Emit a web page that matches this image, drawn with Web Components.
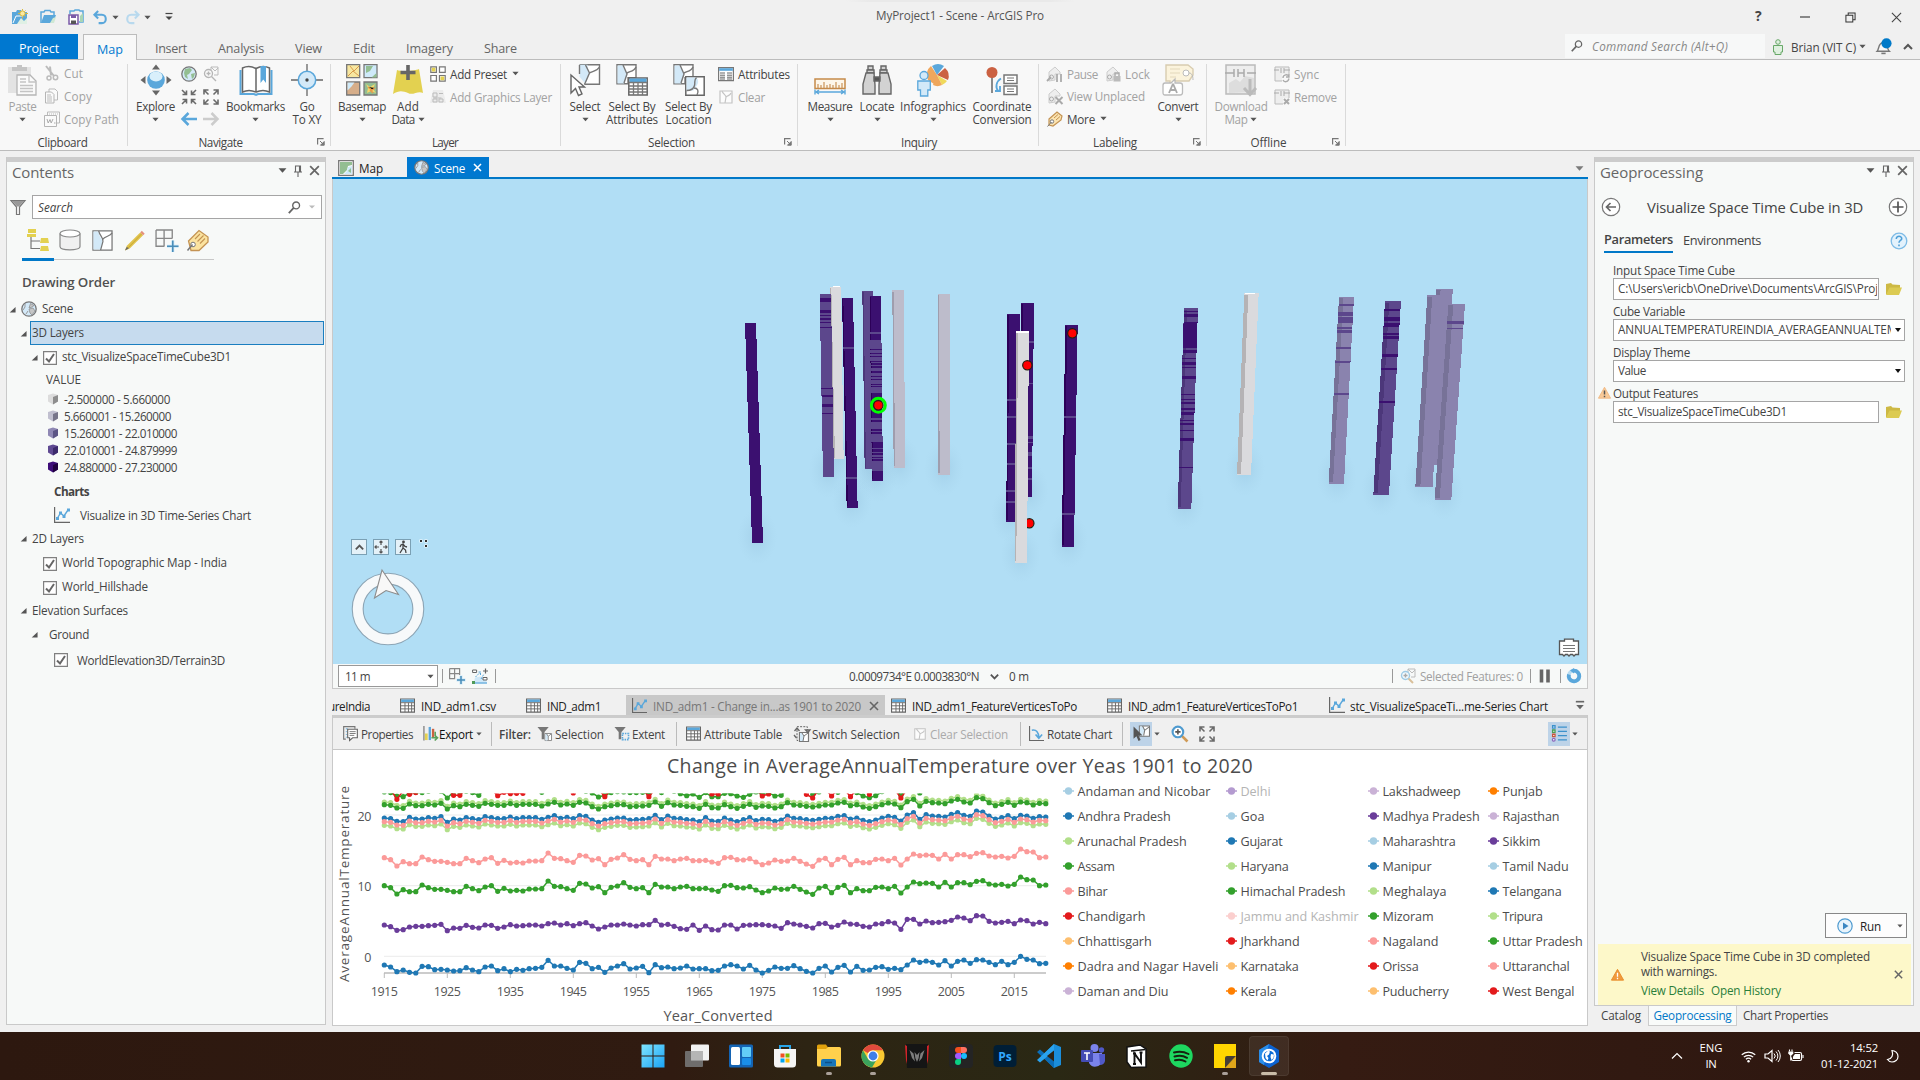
<!DOCTYPE html>
<html lang="en">
<head>
<meta charset="utf-8">
<title>MyProject1 - Scene - ArcGIS Pro</title>
<style>
html,body{margin:0;width:1920px;height:1080px;overflow:hidden;background:#f0f0f0}
body{font:11.7px/16px "Open Sans","Noto Sans",sans-serif;color:#444}
</style>
</head>
<body>
<pro-app></pro-app>
<script>
const G='#6a6a6a', B='#5aa7db', LB='#d3e9f8', Y='#e3d150', D='#bdbdbd';
/* name: [viewBox size, markup] */
const ICONS={
 newproj:[16,`<path d="M0 3h4l1-2h4l1 2h5v12H0z" fill="${B}"/><path d="M5 15l4-6 3 3 3-3v6z" fill="#dff0e4"/><path d="M1 14l3-7h7" stroke="#fff" fill="none"/><circle cx="10.500" cy="4.500" r="2.600" fill="#fbe9a0" stroke="#d8b93e"/><path d="M10.500 0v1.500M10.500 8v1.500M6 4.500h1.500M14 4.500h2M7.500 1.500l1 1M13.500 1.500l-1 1M13.500 7.500l-1-1" stroke="#d8b93e"/>`],
 openproj:[16,`<path d="M1 14V3h3l1-1.500h5L11 3h3v3" fill="none" stroke="${B}" stroke-width="1.500"/><path d="M1 14l3-8h12l-3 8z" fill="${B}"/><path d="M10 14l3-5 3-1-2 6z" fill="#cfe8d4"/>`],
 saveproj:[16,`<path d="M2 5V2h4l1-1h4l1 1h3v11h-4" fill="none" stroke="${B}" stroke-width="1.500"/><path d="M12 13V7l3-3v9z" fill="#a9d5b5"/><path d="M1 6h9v9H1z" fill="#fff" stroke="#7a5aa8" stroke-width="1.500"/><path d="M3 6h5v3H3z" fill="#7a5aa8"/><path d="M3 11.500h5V15H3z" fill="#555"/>`],
 undo:[16,`<path d="M5.500 1L1.500 5l4 4M2 5h7.500c5.500 0 5.500 9 0 9H6" fill="none" stroke="${B}" stroke-width="2.200"/>`],
 redo:[16,`<path d="M10.500 1l4 4-4 4M14 5H6.500C1 5 1 14 6.500 14H10" fill="none" stroke="#b8d9ee" stroke-width="2.200"/>`],
 custom:[10,`<path d="M1.500 1.500h7" stroke="#444" stroke-width="1.200"/><path d="M1.500 4.500h7L5 8z" fill="#444"/>`],
 arrow:[8,`<path d="M.5 2h7L4 6z" fill="#555"/>`],
 arrowg:[8,`<path d="M1 2.500h6L4 5.500z" fill="#bbb"/>`],
 paste:[32,`<path d="M1 3h23v26H1z" fill="#e3e3e3"/><path d="M5 3h5V1h5v2h5v4H5z" fill="#c4c4c4"/><path d="M10 11h13l6 6v14H10z" fill="#fafafa" stroke="#b5b5b5" stroke-width="1.300"/><path d="M22 11v7h7M13 15h6M13 18h6M13 21.500h13M13 24.500h13M13 27.500h13" fill="none" stroke="#c4c4c4" stroke-width="1.300"/>`],
 cut:[16,`<path d="M2 1l8 10M6 1.500l1 9" stroke="#bbb" stroke-width="2"/><circle cx="5" cy="13" r="2" fill="none" stroke="#bbb" stroke-width="1.500"/><circle cx="11.500" cy="12.500" r="2.200" fill="none" stroke="#bbb" stroke-width="1.500"/>`],
 copy:[16,`<path d="M5 1h6l2.500 2.500V12H5z" fill="#fafafa" stroke="#bbb"/><path d="M1.500 4h6L10 6.500V15H1.500z" fill="#fafafa" stroke="#b5b5b5"/><path d="M3 7h4M3 9h5M3 11h5M3 13h5" stroke="#bbb"/>`],
 copypath:[16,`<path d="M3.500 1h12v11h-12z" fill="#fafafa" stroke="#bbb"/><path d="M5 3h9" stroke="#bbb" stroke-dasharray="1 1"/><path d="M.5 4.500h12v11H.5z" fill="#fafafa" stroke="#b5b5b5"/><path d="M3 8l1.200 4L6 8.500l1.200 3.500L9 8" fill="none" stroke="#aaa"/><path d="M10 12h1.500" stroke="#aaa"/>`],
 explore:[32,`<circle cx="16" cy="16" r="8.800" fill="${B}"/><ellipse cx="16" cy="12.500" rx="6.500" ry="5" fill="#d9effb"/><path d="M12 5.500h8L16 .5zM12 26.500h8L16 31.500zM5.500 12v8L.5 16zM26.500 12v8l5-4z" fill="#666"/>`],
 globe:[16,`<circle cx="8" cy="8" r="7.200" fill="${LB}" stroke="#777" stroke-width="1.300"/><path d="M4 3l5-1 2 2-3 4-2 1 1 4-3-2-1-4zM10 8l4-1-1 4-2 2z" fill="#93be92"/>`],
 zoomsel:[16,`<path d="M8 1h7v8h-4M8 4v-3l4 4 3-3" fill="none" stroke="#bbb"/><circle cx="5.500" cy="7.500" r="4" fill="#fafafa" stroke="#b5b5b5" stroke-width="1.300"/><path d="M3.500 7.500h4M5.500 5.500v4M8.500 10.500L13 15" stroke="#b5b5b5" stroke-width="1.400"/>`],
 fixin:[16,`<path d="M1 1l4 4M15 1l-4 4M1 15l4-4M15 15l-4-4M5.500 1.500v4h-4M10.500 1.500v4h4M5.500 14.500v-4h-4M10.500 14.500v-4h4" fill="none" stroke="${G}" stroke-width="1.600"/>`],
 fixout:[16,`<path d="M1.500 1.500l4 4M14.500 1.500l-4 4M1.500 14.500l4-4M14.500 14.500l-4-4M5.500 1h-4.500v4.500M10.500 1h4.500v4.500M5.500 15H1v-4.500M10.500 15H15v-4.500" fill="none" stroke="${G}" stroke-width="1.600"/>`],
 back:[16,`<path d="M7.500 2L1.500 8l6 6M2 8h14" fill="none" stroke="${B}" stroke-width="2.500"/>`],
 fwd:[16,`<path d="M8.500 2l6 6-6 6M14 8H0" fill="none" stroke="#ccc" stroke-width="2.500"/>`],
 bookmark:[32,`<path d="M.5 6v24H14l2 1 2-1h13.500V6" fill="none" stroke="${B}" stroke-width="2"/><path d="M2.500 4c4-2 9-2 13.500.5C20.500 2 25.500 2 29.500 4v24c-4-2-9-2-13.500 0-4.500-2-9.500-2-13.500 0z" fill="#fff" stroke="#666" stroke-width="1.500"/><path d="M16 4.500V28" stroke="#666" stroke-width="1.500"/><path d="M20.500 2H26v17l-2.700-3.500-2.800 3.500z" fill="${B}"/>`],
 goxy:[32,`<path d="M16 0v7M16 25v7M0 16h7M25 16h7" stroke="#666" stroke-width="1.300"/><circle cx="16" cy="16" r="8.700" fill="${LB}" stroke="${B}" stroke-width="1.500"/><circle cx="16" cy="16" r="1.700" fill="#444"/>`],
 basemap:[32,`<g stroke="#777" stroke-width="1.300"><path d="M.7.7h13v13H.7z" fill="#f7e7a0"/><path d="M18 .7h13v13H18z" fill="#cfeaf9"/><path d="M.7 18h13v13H.7z" fill="#d6ae8a"/><path d="M18 18h13v13H18z" fill="#93be92"/></g><path d="M2 12l5-5 6 5M4 2l4 5 5-5" stroke="#d89a4b" fill="none"/><path d="M20 2h7l-3 5-4 2z" fill="#93be92"/><path d="M30.500 9l-5 4.500h5z" fill="#93be92"/><path d="M1.500 18.500h7l-3 4-4 4z" fill="#cfeaf9"/><path d="M20 20l4 3 5-3-2 5 3 4-5-2-4 2 1-5z" fill="#f5d76a"/><path d="M22 23l4 3 3-2M24 26l3 3" stroke="#e89a4a" stroke-width="1.500"/>`],
 adddata:[32,`<path d="M5 6c4 2 18 1 22-1l4 24c-5-3-10 3-15 0-5-2-9-3-15 1z" fill="${Y}"/><path d="M16 1v15M8.500 8.500h15" stroke="#666" stroke-width="3.600"/>`],
 preset:[16,`<g fill="#fff" stroke="#777" stroke-width="1.200"><path d="M.8.8h5.600v5.600H.8zM9.500.8h5.700v5.600H9.500z"/><path d="M.8 9.500h5.600v5.700H.8zM9.500 9.500h5.700v5.700H9.500z"/></g><path d="M1.800 1.800h3.600v3.600H1.800zM10.500 10.500h3.700v3.700h-3.700z" fill="${Y}"/>`],
 graphics:[16,`<path d="M3 1h10l3 13H0z" fill="#ececec"/><path d="M3 4h4v4H3zM9 4.500h4M3.500 9h8M3 10h4v3H3zM9 10h4v3H9z" fill="none" stroke="#bbb"/>`],
 select:[32,`<path d="M10.500 .8h20v19.500H15.500" fill="#fff" stroke="#777" stroke-width="1.400"/><path d="M10.500 .8h8c0 5 2 8 2 9l-4 10-6-7z" fill="${LB}"/><path d="M15.500 20.500L20.500 9l-4-8M20.500 9c2-2 7-1 10-6M10.500 1v9" fill="none" stroke="#777" stroke-width="1.400"/><path d="M2 11v18l4.500-4.500 3 7 3.500-1.500-3-7h5.500z" fill="#fff" stroke="#666" stroke-width="1.400"/>`],
 selattr:[32,`<path d="M1 .8h19v13H12v6H1z" fill="#fff" stroke="#777" stroke-width="1.400"/><path d="M1.500 1.500H7c0 4 4 6 4 9l-3 9H1.500z" fill="${LB}"/><path d="M7 1l4 9-3 9M11 9c2-2 7-1 9-6" fill="none" stroke="#777" stroke-width="1.400"/><path d="M12.800 14h18.400v17H12.800z" fill="#fff" stroke="#666" stroke-width="1.500"/><path d="M13.500 14.500h17v3.500h-17z" fill="${B}"/><path d="M13 18.500h18M13 22h18M13 25h18M13 28h18M17.500 18v13M22 18v13M26.500 18v13" stroke="#777" stroke-width="1.300"/>`],
 selloc:[32,`<path d="M1 .8h19v13H12v6H1z" fill="#fff" stroke="#777" stroke-width="1.400"/><path d="M1.500 1.500H7c0 4 4 6 4 9l-3 9H1.500z" fill="${LB}"/><path d="M7 1l4 9-3 9M11 9c2-2 7-1 9-6" fill="none" stroke="#777" stroke-width="1.400"/><path d="M12.800 12.800h18.400v18.500H12.800z" fill="#fff" stroke="#666" stroke-width="1.500"/><path d="M13.500 13.500h10c4 5 0 8-3 13h-7z" fill="${LB}"/><path d="M13.500 26.500c3 0 7-1 8-5s-1-5 2-8M21 24c4 0 5 3 3 7" fill="none" stroke="#777" stroke-width="1.400"/>`],
 attrs:[16,`<path d="M.6 1.600h14.800v13H.6z" fill="#fff" stroke="#777" stroke-width="1.200"/><path d="M1.200 2.200h13.600v2.600H1.200z" fill="${B}"/><path d="M2 7h5M2 9.200h5M2 11.200h5M2 13h5M9 7h5M9 9.200h5M9 11.200h5M9 13h5" stroke="#666"/>`],
 clear:[16,`<path d="M2 2h12v12H2z" fill="#fcfcfc" stroke="#c4c4c4" stroke-width="1.200"/><path d="M4 2c1 3 4 4 4 6L7 14M8 8c2-2 4-1 5-4" fill="none" stroke="#c4c4c4" stroke-width="1.200"/>`],
 measure:[32,`<path d="M1 15h30v9.500H1z" fill="#fdf6ea" stroke="#c58a4a" stroke-width="1.500"/><path d="M4 24v-4M7 24v-3M10 24v-6M13 24v-3M16 24v-4M19 24v-3M22 24v-6M25 24v-3M28 24v-5" stroke="#c58a4a" stroke-width="1.100"/><path d="M1 25.500v5M31 25.500v5M2 28h28M5 26l-3 2 3 2M27 26l3 2-3 2" fill="none" stroke="${B}" stroke-width="1.400"/>`],
 locate:[32,`<g fill="#d2d2d2" stroke="#666" stroke-width="1.400"><path d="M7 2h5v4H7zM20 2h5v4h-5z"/><path d="M6 6h7v3H6zM19 6h7v3h-7z"/><path d="M5 9h8l1 12v9H2V20zM27 9h-8l-1 12v9h12V20z"/><path d="M13 13h6v4h-6z" fill="#555"/></g>`],
 info:[32,`<path d="M20 11L14 2a11 11 0 0 0-3 14l9 6z" fill="#efa75d"/><path d="M20 11l-5-9a11 11 0 0 1 12 0z" fill="${B}"/><path d="M20 11l8-7a11 11 0 0 1 3 12z" fill="#cb6142"/><path d="M20 11l10 6a11 11 0 0 1-5 4z" fill="#f0d95a"/><path d="M20 11l5 10a10 10 0 0 1-9 0z" fill="#efa75d"/><circle cx="7" cy="11.500" r="4" fill="${LB}" stroke="${B}" stroke-width="1.300"/><path d="M.8 17h12.500v9h-2.500v6H3.500v-6H.8z" fill="${LB}" stroke="${B}" stroke-width="1.300"/>`],
 coord:[32,`<path d="M6 10v19" stroke="#666" stroke-width="1.500"/><circle cx="6" cy="8.500" r="5.500" fill="#cb6142"/><path d="M15 14.500c-5 3-6 9-2.500 13M9 27h5v-5" fill="none" stroke="${B}" stroke-width="1.800"/><path d="M18 11h13v8.500H18zM18 22h13v8.500H18z" fill="#fff" stroke="#777" stroke-width="1.500"/><path d="M21 14h7M21 16.500h7M21 25h7M21 27.500h7" stroke="#777" stroke-width="1.200"/>`],
 pause:[16,`<path d="M2 15V6l6-5 5 5v2H8v6z" fill="#eee" stroke="#ccc"/><circle cx="4.500" cy="11" r="2" fill="none" stroke="#aaa"/><path d="M0 15l4-4M10 8v8M14 8v8" stroke="#aaa" stroke-width="1.800"/>`],
 lock:[16,`<path d="M2 15V6l6-5 5 5v2H8v6z" fill="#eee" stroke="#ccc"/><circle cx="4.500" cy="11" r="2" fill="none" stroke="#aaa"/><path d="M8.500 10h7v5.500h-7z" fill="#bbb"/><path d="M10 10V7h4v3" fill="none" stroke="#aaa" stroke-width="1.400"/>`],
 unplaced:[16,`<path d="M2 15V6l6-5 5 5v2H8v6z" fill="#eee" stroke="#ccc"/><circle cx="4.500" cy="11" r="2" fill="none" stroke="#aaa"/><path d="M8.500 9l7 7M15.500 9l-7 7" stroke="#aaa" stroke-width="2"/>`],
 more:[16,`<path d="M2 8l8-7 5 4-1 4-8 6-4-1z" fill="#fbe3b0" stroke="#c49353" stroke-width="1.200"/><path d="M7 7l4-3.500M9 9l4-3.500" stroke="#c49353"/><circle cx="5" cy="10.500" r="1.700" fill="#fff" stroke="#777"/><path d="M.5 15.500L4.500 11" stroke="#777"/>`],
 convert:[32,`<path d="M4 1h22l5 4v6l-4 6H13l-5 4v-4H4z" fill="#fbf3dc" stroke="#d8ccb0" stroke-width="1.400"/><path d="M8 5h10M8 9h10M8 13h6" stroke="#e3d8bb"/><circle cx="24" cy="9" r="3" fill="#fff" stroke="#bbb"/><path d="M27 9c3 0 4 3 4 7" fill="none" stroke="#bbb"/><path d="M3 19h6l4-4v4h5q2.500 0 2.500 2.500v7q0 2.500-2.500 2.500H3Q1 31 1 28.500v-7Q1 19 3 19z" fill="#fff" stroke="#bbb" stroke-width="1.300"/><path d="M7 29l3.700-8.500h.6L15 29M8.500 26h5" fill="none" stroke="#aaa" stroke-width="1.800"/>`],
 download:[32,`<path d="M1 1h29v29H1z" fill="#eee" stroke="#bbb" stroke-width="1.500"/><path d="M4 29V19l7-4 4 3 5-6 9 2v14z" fill="#ddd"/><path d="M0 9h9M22 9h9M9 5v8M13 5v8M13 9h6M19 5v8" fill="none" stroke="#aaa" stroke-width="1.500"/><path d="M25 15v14M19 24l6 6.500 6-6.500" fill="none" stroke="#bbb" stroke-width="3"/>`],
 sync:[16,`<path d="M1 1h14v14H1z" fill="#eee" stroke="#bbb"/><path d="M0 4h5M7 2v5M10 2v5M10 4h6" stroke="#aaa" fill="none"/><path d="M8 8h8v8H8z" fill="#f8f8f8"/><path d="M9 12c0-4 5-4 6-1.500M15 8v3h-3M15 12.500c-1 4-5 4-6 1.500" fill="none" stroke="#aaa" stroke-width="1.300"/>`],
 remove:[16,`<path d="M1 1h14v14H1z" fill="#eee" stroke="#bbb"/><path d="M0 4h5M7 2v5M10 2v5M10 4h6" stroke="#aaa" fill="none"/><path d="M9 9h7v7H9z" fill="#f8f8f8"/><path d="M10 10l5 5M15 10l-5 5" stroke="#aaa" stroke-width="2"/>`],
 launcher:[8,`<path d="M.6 6.500V.6h6" fill="none" stroke="#777" stroke-width="1.200"/><path d="M3 3l4 4M7.200 3.500v3.700H3.500z" stroke="#777" fill="#777"/>`],
 search:[16,`<circle cx="10" cy="5.500" r="4.200" fill="none" stroke="#666" stroke-width="1.700"/><path d="M7 8.500L1 15" stroke="#666" stroke-width="2.200"/>`],
 user:[16,`<circle cx="8" cy="3" r="2.300" fill="#dff0df" stroke="#68a868"/><path d="M3.500 6.500h9V13H11v2.500H5V13H3.500z" fill="#dff0df" stroke="#68a868"/>`],
 bell:[16,`<path d="M2 12.500c2-2 1-8 5.500-8S11 10 13.500 12.500z" fill="#f8f8f8" stroke="#777" stroke-width="1.300"/><path d="M6 14.500h4" stroke="#777" stroke-width="1.500"/><circle cx="10.800" cy="5" r="4.800" fill="#0079c8"/>`],
 up:[12,`<path d="M2 8l4-4 4 4" fill="none" stroke="#555" stroke-width="2"/>`],
 down:[12,`<path d="M2 4l4 4 4-4" fill="none" stroke="#555" stroke-width="2"/>`],
 min:[12,`<path d="M1 6h10" stroke="#333" stroke-width="1.100"/>`],
 restore:[12,`<path d="M1 3.500h7.500V11H1zM3.500 3.500V1H11v7.500H8.500" fill="none" stroke="#333" stroke-width="1.100"/>`],
 x:[12,`<path d="M1 1l10 10M11 1L1 11" stroke="#444" stroke-width="1.200"/>`],
 xs:[12,`<path d="M2 2l8 8M10 2l-8 8" stroke="#666" stroke-width="1.600"/>`],
 pin:[12,`<path d="M3.500 1h5v6h-5zM2 7h8M6 7v5M7.500 1v6" fill="none" stroke="#666" stroke-width="1.100"/>`],
 funnel:[16,`<path d="M1 1.500h14L9.500 8v7.500h-3V8z" fill="#fafafa" stroke="#777" stroke-width="1.200"/><path d="M2 2h12l-5 5.500H7z" fill="#999"/>`],
 tdraw:[22,`<path d="M1 0h8v4H1zM0 5h9v3H0z" fill="${Y}"/><path d="M4 8v11.500h9M4 12h9" fill="none" stroke="#777" stroke-width="1.200"/><path d="M14 9h7l1 5h-9zM14 17h7l1 5h-9z" fill="${Y}"/>`],
 tsrc:[22,`<path d="M1 4.500v13c0 4.500 20 4.500 20 0v-13" fill="#f0f0f0" stroke="#888" stroke-width="1.200"/><ellipse cx="11" cy="4.500" rx="10" ry="3.500" fill="#fff" stroke="#888" stroke-width="1.200"/>`],
 tsel:[22,`<path d="M1 1h20v20H1z" fill="#fff" stroke="#777" stroke-width="1.300"/><path d="M1.500 1.500H7c0 6 5 8 4 12l-2 7H1.500z" fill="${LB}"/><path d="M7 1c1 5 5 7 4.500 11L9 21M11 10c3-4 8-3 10-7" fill="none" stroke="#777" stroke-width="1.300"/>`],
 tedit:[22,`<path d="M1 21.500l2-5L17 2.500l3 3L6 19.500z" fill="#e0c34c"/><path d="M17 2.500l1.700-1.700 3 3L20 5.500z" fill="#e58f7b"/><path d="M1 21.500l2-4 2 2z" fill="#666"/><path d="M4 19L18.500 4" stroke="#c7a734"/>`],
 tsnap:[22,`<path d="M1 1h15.500v8M16.500 9H1M8.700 1v15.500M1 1v15.500h8" fill="none" stroke="#888" stroke-width="1.300"/><path d="M15.500 11h3v4h4v3h-4v4h-3v-4h-4v-3h4z" fill="#c9e7f8"/><path d="M17 11v11M11.500 16.500h11" stroke="#4a8db8" stroke-width="1.500"/>`],
 tlabel:[22,`<path d="M1.500 12L12 1.500l9 6.500v5l-9 8.500H4z" fill="#fbe3a0" stroke="#c49353" stroke-width="1.300"/><path d="M8 10l5-5M10.500 12.500l6-6M13 14.500l5-5" stroke="#c49353" stroke-width="1.100"/><circle cx="6" cy="15.500" r="2.300" fill="#fff" stroke="#777"/><path d="M.5 21.500l5-6" stroke="#777" stroke-width="1.500"/>`],
 sceneglobe:[16,`<circle cx="8" cy="8" r="7.200" fill="${LB}" stroke="#777" stroke-width="1.300"/><path d="M9.500 2.500l3.500 2-2 1.500-3 1zM8 8l4-1 2 3-3 4-2-2z" fill="#c6c6c6" stroke="#888" stroke-width=".7"/><path d="M4 3v3L2 9M5 13l2-3" stroke="#999" fill="none"/>`],
 tri:[8,`<path d="M7.500 1v6.500H.8z" fill="#555"/>`],
 check:[14,`<path d="M.6.600h12.800v12.800H.6z" fill="#fff" stroke="#808080" stroke-width="1.200"/><path d="M3 7.500l3 3 5-7.500" fill="none" stroke="#666" stroke-width="2"/>`],
 chart:[16,`<path d="M.6 0v15.400H16" fill="none" stroke="#666" stroke-width="1.200"/><path d="M3.500 11l3-5 3.500 3 4-6" fill="none" stroke="${B}" stroke-width="1.400"/><path d="M2 10h3v3H2zM5 4.500h3v3H5zM8.500 8h3v3h-3zM13 1.500h3v3h-3z" fill="${B}"/>`],
 map:[16,`<path d="M.7.700h14.600v14.600H.7z" fill="#fff" stroke="#777" stroke-width="1.300"/><path d="M2 2h12v3l-4 1-1 4-4 4H2z" fill="#93be92"/><path d="M14 6l-4 1-1 4-3 3h8z" fill="#cfeaf9"/><path d="M10 11l3-3v5z" fill="#93be92"/>`],
 table:[16,`<path d="M.6 1h14.800v14H.6z" fill="#fff" stroke="#666" stroke-width="1.200"/><path d="M1.200 1.600h13.600v2.700H1.200z" fill="${B}"/><path d="M1 5h14M1 8.300h14M1 11.600h14M5.300 5v10M9 5v10M12.400 5v10" stroke="#666"/>`],
 grid:[16,`<path d="M.6.600h10v5H.6M5.600.600v10H.6V.600M10.600 5v2M.6 5.600h10" fill="none" stroke="#888" stroke-width="1.200"/><path d="M10.500 7.500h3v3h3v3h-3v3h-3v-3h-3v-3h3z" fill="#c9e7f8"/><path d="M12 8v8M8 12h8" stroke="#4a8db8" stroke-width="1.500"/>`],
 corr:[16,`<path d="M2 14.500l1-5 6-1 4 2 2 4z" fill="#cfe8f8"/><path d="M1 15h14" stroke="${B}" stroke-width="1.300"/><path d="M.6 2h4v2.500h-4zM11 9.500h4V12h-4z" fill="#fff" stroke="#666"/><path d="M11 3h5M13.500.5v5" stroke="#666" stroke-width="1.200"/><path d="M3.500 9l5-5M8.500 7V4H5.500M9 11l3-5" stroke="${B}" fill="none" stroke-dasharray="2 1"/><path d="M0 13h3v3H0z" fill="#4f9a58"/>`],
 pausebar:[12,`<path d="M2.500 -.500v13M9 -.500v13" stroke="#666" stroke-width="3.600"/>`],
 refresh:[16,`<circle cx="8" cy="8" r="5.300" fill="none" stroke="#b9dcf1" stroke-width="3.800"/><path d="M8 2.700A5.300 5.300 0 1 1 2.900 6.500" fill="none" stroke="${B}" stroke-width="3.800"/><path d="M8 0L4 2.500 8 5.500z" fill="${B}"/>`],
 selfeat:[16,`<path d="M8 1h7v8h-4M8 4v-3l4 4 3-3" fill="none" stroke="#bbb"/><circle cx="5.500" cy="7.500" r="4" fill="#f3fafe" stroke="#9fcbe6" stroke-width="1.400"/><path d="M3.500 7.500h4M5.500 5.500v4" stroke="#aaa" stroke-width="1.400"/><path d="M8.500 10.500L13 15" stroke="#d9c09a" stroke-width="2"/>`],
 props:[16,`<path d="M3 14H.7V.7h12V3" fill="none" stroke="#777" stroke-width="1.200"/><path d="M3 3h2M3 6h1M3 9h1M3 12h1" stroke="${B}"/><path d="M5 3.500h10.300v9h-5L7 15.500v-3H5z" fill="#fff" stroke="#666" stroke-width="1.200"/><path d="M7 6h6.500M7 8h6.500M7 10h5" stroke="#777"/>`],
 export:[16,`<path d="M1 0v15.500" stroke="#555"/><path d="M2 8h3v7H2z" fill="${Y}"/><path d="M6 1h2.500v14H6z" fill="${B}"/><path d="M9.500 3H12v9H9.500z" fill="#cb6142"/><path d="M9 12.500h6M12.500 10l3 2.500-3 3M13 6v4" stroke="#5aa05a" stroke-width="1.700" fill="none"/>`],
 fsel:[16,`<path d="M.5 1h12L8 6.500V14H5V6.500z" fill="#777"/><path d="M8.500 8h7v7.500h-7z" fill="#fff" stroke="#888"/><path d="M9 8.500h2l1 3-1 4H9z" fill="${LB}"/><path d="M10 8l2 3 3-2.500M12 11v4" stroke="#888" fill="none"/>`],
 fext:[16,`<path d="M.5 1h12L8 6.500V14H5V6.500z" fill="#777"/><path d="M8 7h8v8.500H8z" fill="#f0f0f0"/><path d="M9 8h6.500v6.500H9z" fill="none" stroke="${B}" stroke-width="1.700" stroke-dasharray="1.600 1"/>`],
 switch:[16,`<path d="M3 4V.7h10.300V4M3 4v10.500h6" fill="none" stroke="#666" stroke-dasharray="2 1.200"/><path d="M5.500 6.500h9v9h-9z" fill="#fff" stroke="#777" stroke-width="1.200"/><path d="M6 7h2l2 3-1 5H6z" fill="${LB}"/><path d="M8 7l2 3 4-3M10 10l-1 5" fill="none" stroke="#777"/><path d="M.5 5l2.500-3 2.500 3M11.500 4h4.500l-2 2.500zM0 9l2.500 3" stroke="#666" fill="none" stroke-width="1.300"/>`],
 rotate:[16,`<path d="M.6 0v15.400H16" fill="none" stroke="#666" stroke-width="1.200"/><path d="M3 4.500c5-1 7 2 7.500 7.500M7 9l3.500 4L14 9" fill="none" stroke="${B}" stroke-width="1.700"/>`],
 selbtn:[16,`<path d="M6 1h9.500v9.500H6z" fill="#fff" stroke="#777"/><path d="M6.500 1.500H9l2 3-2 5.500H6.500z" fill="${LB}"/><path d="M9 1l2 4 4-3M11 5l-1 5" stroke="#777" fill="none"/><path d="M.5 1.500v11.500l2.700-2.300 2 4.300 2-1-2-4.200h3.800z" fill="#555"/>`],
 zoomin:[16,`<path d="M10 10l5.500 5.500" stroke="#d09a55" stroke-width="2.500"/><circle cx="6.500" cy="6.500" r="5" fill="#fff" stroke="#4f9bd0" stroke-width="2"/><path d="M4 6.500h5M6.500 4v5" stroke="#555" stroke-width="1.500"/>`],
 list:[16,`<g fill="#fff" stroke-width="1.200"><path d="M1.500.7h2.300V3H1.500z" stroke="#3b91cc"/><path d="M1.500 4.700h2.300V7H1.500z" stroke="#4d9e55"/><path d="M1.500 8.700h2.300V11H1.500z" stroke="#c8553a"/><circle cx="2.600" cy="13.900" r="1.300" stroke="#8d6bbd"/></g><path d="M6.500 1.900H15M6.500 5.900H15M6.500 9.900H15M6.500 13.900H15" stroke="#3b91cc" stroke-width="1.200"/>`],
 overflow:[12,`<path d="M1 2h10" stroke="#666" stroke-width="2"/><path d="M1.500 6h9L6 11z" fill="#666"/>`],
 warn:[16,`<path d="M8 1.500L15.500 15H.5z" fill="#f8c998" stroke="#efb57c"/><path d="M8 5.500v5M8 12v1.800" stroke="#555" stroke-width="1.800"/>`],
 warn2:[16,`<path d="M8 2.500L14.500 14H1.500z" fill="#f09a3c" stroke="#e88b28"/><path d="M8 6v4.500M8 11.500V13" stroke="#fff" stroke-width="1.400"/>`],
 backc:[20,`<circle cx="10" cy="10" r="8.700" fill="#fff" stroke="#777" stroke-width="1.200"/><path d="M9.500 6L5.500 10l4 4M6 10h9" fill="none" stroke="#666" stroke-width="1.700"/>`],
 plusc:[20,`<circle cx="10" cy="10" r="8.700" fill="#fff" stroke="#777" stroke-width="1.200"/><path d="M4.500 10h11M10 4.500v11" stroke="#555" stroke-width="1.700"/>`],
 help:[18,`<circle cx="9" cy="9" r="7.800" fill="#e3f2fc" stroke="#7dbbe6" stroke-width="1.300"/><path d="M6.300 7c0-3.800 5.700-3.300 5.400-.2-.2 1.700-2.700 1.700-2.700 4M9 12.600v1.700" fill="none" stroke="#4fa0d8" stroke-width="1.600"/>`],
 folder:[16,`<path d="M0 13V3l5-1 1.500 1.500L14 4v3H5l-4 6z" fill="#cdb944"/><path d="M0 14L3.500 6.500H16L13 14z" fill="#dccb52"/>`],
 run:[16,`<circle cx="8" cy="8" r="7.200" fill="#e8f4fc" stroke="#4f9bd0" stroke-width="1.200"/><path d="M6 4.500l5.500 3.500L6 11.500z" fill="#3b87c2"/>`],
 scenepanel:[22,`<path d="M1.500 3h5V1.200h9V3h5v13.500h-3l-1.500 1.500-1.500-1.500h-2L11 18l-1.500-1.500h-2L6 18l-1.500-1.500h-3z" fill="#fff" stroke="#555" stroke-width="1.300"/><path d="M5 7.500h12M5 10.500h12M5 13.500h12" stroke="#777" stroke-width="1.200"/>`],
 wifi:[16,`<path d="M.8 6.200a10.500 10.500 0 0 1 14.400 0M3 8.700a7.500 7.500 0 0 1 10 0M5.200 11a4.300 4.300 0 0 1 5.600 0" fill="none" stroke="#fff" stroke-width="1.300"/><circle cx="8" cy="13" r="1.300" fill="#fff"/>`],
 sound:[16,`<path d="M1 6h3l4-3.500v11L4 10H1z" fill="none" stroke="#fff" stroke-width="1.200"/><path d="M10 5.500a3.500 3.500 0 0 1 0 5M12 3.500a6.400 6.400 0 0 1 0 9M14 2a9 9 0 0 1 0 12" fill="none" stroke="#fff"/>`],
 batt:[16,`<path d="M6.500 4.500H12q1.500 0 1.500 1.500v5q0 1.500-1.500 1.500H5q-1.500 0-1.500-1.500V9.500" fill="none" stroke="#fff" stroke-width="1.200"/><path d="M7 6h5v5H5V8.500z" fill="#fff"/><path d="M15 7v3M1.500 1.500v2M4 1.500v2M2.700 6.500v6" stroke="#fff" stroke-width="1.100"/><path d="M.3 3.500h5v2L3.800 7.200h-2L.3 5.500z" fill="#fff"/>`],
 moon:[14,`<path d="M6 1.500c3 0 6 2.500 6 6s-3 5.500-6 5.500c-2 0-3.500-1-4.500-2.500C6 10 7.500 6 6 1.500z" fill="none" stroke="#fff" stroke-width="1.200"/>`],
 upw:[12,`<path d="M1 8.500l5-5 5 5" fill="none" stroke="#fff" stroke-width="1.200"/>`],
 win:[24,`<defs><linearGradient id="g" x2="1" y2="1"><stop stop-color="#7fe4ff"/><stop offset="1" stop-color="#1aa3f5"/></linearGradient></defs><path d="M.5.5h11v11H.5zM12.500.500h11v11h-11zM.5 12.500h11v11H.5zM12.500 12.500h11v11h-11z" fill="url(#g)"/>`],
 task:[24,`<rect x="6" y=".5" width="18" height="16" rx="1" fill="#f2f2f2"/><rect x="0" y="7" width="18" height="16" rx="1" fill="#777" opacity=".9"/><path d="M6 7h12v9.500H6z" fill="#b5b5b5"/>`],
 widgets:[24,`<rect width="24" height="23" y=".5" rx="1.500" fill="#1464b4"/><rect x="2" y="3" width="9" height="18" rx="1.500" fill="#fff"/><rect x="13" y="3" width="9" height="10" rx="1" fill="#62cdf8"/><rect x="13" y="14" width="9" height="7" rx="1" fill="#1a8ee8"/>`],
 store:[24,`<path d="M7 6V2h10v4" fill="none" stroke="#29a5e8" stroke-width="2"/><path d="M1 5h22v15q0 3.500-3.500 3.500h-15Q1 23.500 1 20z" fill="#f5f5f5"/><path d="M7.500 9.500h4v4h-4z" fill="#f25022"/><path d="M12.500 9.500h4v4h-4z" fill="#7fba00"/><path d="M7.500 14.500h4v4h-4z" fill="#00a4ef"/><path d="M12.500 14.500h4v4h-4z" fill="#ffb900"/>`],
 explorer:[24,`<path d="M0 2q0-1.500 1.500-1.500H9l2 3v4H0z" fill="#e0a10c"/><path d="M0 5h9l2-2h11.500Q24 3 24 4.500v16.500q0 1.500-1.500 1.500h-21Q0 22.500 0 21z" fill="#ffd04c"/><path d="M4 22.500V17q0-2 2-2h11q2 0 2 2v5.500z" fill="#1775b9"/><path d="M8 18.500h7" stroke="#0d4f86" stroke-width="1.500"/>`],
 chrome:[24,`<circle cx="12" cy="12" r="11.500" fill="#f9c932"/><path d="M2 6.300A11.500 11.500 0 0 1 22 6.300H12a5.800 5.800 0 0 0-5 3z" fill="#e04a3d"/><path d="M2 6.300A11.500 11.500 0 0 0 11 23.500l5-8.600a5.800 5.800 0 0 1-9 0z" fill="#3ba35c"/><circle cx="12" cy="12" r="5.600" fill="#fff"/><circle cx="12" cy="12" r="4.400" fill="#3f7fe8"/>`],
 predator:[24,`<path d="M1 0h22l-1 24H2z" fill="#151515"/><path d="M0 1l2 1v18l-1-4zM24 1l-2 1v18l1-4z" fill="#d2232a"/><path d="M4.500 6l4 3.500 1.500 8-3-3.500zM19.500 6l-4 3.500-1.500 8 3-3.500zM9.500 8L12 11l2.500-3-.8 6L12 18l-1.700-4z" fill="#7d7d7d"/>`],
 figma:[24,`<rect width="24" height="24" rx="4" fill="#242424"/><path d="M12 3H9a3 3 0 0 0 0 6h3z" fill="#f24e1e"/><path d="M12 3h3a3 3 0 0 1 0 6h-3z" fill="#ff7262"/><path d="M12 9H9a3 3 0 0 0 0 6h3z" fill="#a259ff"/><circle cx="15" cy="12" r="3" fill="#1abcfe"/><path d="M12 15H9a3 3 0 1 0 3 3z" fill="#0acf83"/>`],
 ps:[24,`<rect x=".5" y="1" width="23" height="22" rx="4" fill="#001e36"/><text x="12" y="16.500" font-size="12" font-weight="700" fill="#31a8ff" text-anchor="middle" font-family="Open Sans,sans-serif">Ps</text>`],
 vscode:[24,`<path d="M17 0l7 3v18l-7 3L5 12z" fill="#1b8edb"/><path d="M17 0v24L0 8l3-2.500 14 12z" fill="#0a6db8"/><path d="M17 0L0 16l3 2.500L17 7z" fill="#2aa3ef"/><path d="M17 6.500v11L10 12z" fill="#2e2414"/>`],
 teams:[24,`<circle cx="13.500" cy="4" r="4" fill="#7b83eb"/><circle cx="20.500" cy="6" r="2.700" fill="#5059c9"/><path d="M8 9h13v8a7 7 0 0 1-13 2z" fill="#7b83eb"/><path d="M18 10h6v7q-1 4-5 4z" fill="#5059c9"/><rect y="6" width="12" height="12" rx="1" fill="#444cb4"/><path d="M3 9h6M6 9v7" stroke="#fff" stroke-width="1.600"/>`],
 notion:[24,`<path d="M2 3l13-2 6 4v18l-15 .5L2 18z" fill="#fff" stroke="#111" stroke-width="1.500"/><path d="M6 7l14.500-1.500" stroke="#111" stroke-width="1.500"/><path d="M9.500 20V9.500l6.500 9V8.500M8 9.500h3M14.500 8.500h3M8 20h3" stroke="#111" stroke-width="1.900" fill="none"/>`],
 spotify:[24,`<circle cx="12" cy="12" r="11.700" fill="#1ed760"/><path d="M5 8.500c5-1.500 10-1 14.500 1.500M5.500 12.500c4.500-1.300 9-.8 12.500 1.300M6 16.300c4-1 7.500-.6 10.500 1.200" fill="none" stroke="#16210f" stroke-width="2" stroke-linecap="round"/>`],
 sticky:[24,`<path d="M1 0h22v12L12 24H1z" fill="#ffd500"/><path d="M23 12L12 24V14q0-2 2-2z" fill="#453e36"/><path d="M23 12v12H12z" fill="#e0a61a"/>`],
 arcgis:[24,`<path d="M12 0l10 6v12l-10 6-10-6V6z" fill="#0b62d0"/><path d="M12 0L2 6v12l5 3z" fill="#2a8eea"/><circle cx="12" cy="12" r="7.300" fill="#fff"/><circle cx="12" cy="12" r="5.300" fill="#0b6bd4"/><path d="M8 9.500l3-2.800 2 .8-1 3-2 1.500 1.500 2-1 2.500-2-2.500zM14 10l3 .5-.5 3.500-2 2-1-3z" fill="#fff"/>`]
};
class UiIcon extends HTMLElement{
 constructor(){super();this.attachShadow({mode:'open'});}
 connectedCallback(){
  const [v,m]=ICONS[this.getAttribute('name')];const s=this.getAttribute('s')||v;
  this.shadowRoot.innerHTML=`<style>:host{display:inline-block;flex:none;width:${s}px;height:${s}px}svg{display:block;overflow:visible}</style><svg width="${s}" height="${s}" viewBox="0 0 ${v} ${v}">${m}</svg>`;
 }
}
customElements.define('ui-icon',UiIcon);

/* Single-line text that tracks itself to a given width; --dy nudges its baseline. */
class FitText extends HTMLElement{
 static all=[];
 constructor(){super();this.attachShadow({mode:'open'}).innerHTML=`<style>:host{display:inline-block;white-space:nowrap;flex:none;transform:translateY(var(--dy,0px))}</style><slot></slot>`;}
 connectedCallback(){FitText.all.push(this);}
 fit(){
  const w=+this.getAttribute('w');if(!w)return;
  this.style.letterSpacing='0';const n=this.textContent.length;
  this.style.letterSpacing=((w-this.getBoundingClientRect().width)/n).toFixed(3)+'px';
 }
}
customElements.define('fit-text',FitText);
const T=(s,w,st='')=>`<fit-text ${w?`w="${w}"`:''} style="${st}">${s}</fit-text>`;
const I=(n,s)=>`<ui-icon name="${n}"${s?` s="${s}"`:''}></ui-icon>`;
/* Lays [x,width,html] items along a flex row that starts at x0. */
const row=(x0,items)=>{let p=x0;return items.map(([x,w,h,st=''])=>{const m=x-p;p=x+w;return `<div style="margin-left:${m.toFixed(1)}px;width:${w}px;flex:none;display:flex;align-items:center;white-space:nowrap;${st}">${h}</div>`;}).join('');};
const define=(name,css,html)=>customElements.define(name,class extends HTMLElement{
 constructor(){super();this.attachShadow({mode:'open'});}
 connectedCallback(){this.shadowRoot.innerHTML=`<style>*{box-sizing:border-box}:host{display:block;box-sizing:border-box}${css}</style>`+(typeof html==='function'?html(this):html);}
});

define('title-bar',`:host{height:34px;display:flex;align-items:center;background:linear-gradient(90deg,#0000 846px,#e9e9e9 870px 1050px,#0000 1075px) 0 0/100% 2px no-repeat #f0f0f0;color:#555}`,
 row(0,[[12,16,I('newproj')],[40,16,I('openproj')],[68,16,I('saveproj')],[93,15,I('undo',15)],[112,8,I('arrow',7)],[125,15,I('redo',15)],[144,8,I('arrow',7)],[164,9,I('custom',10)],
 [876,168,T('MyProject1 - Scene - ArcGIS Pro',168,'margin-top:-4px')],[1755,9,`<span style="font:700 14px 'Open Sans';color:#444;margin-top:-3px">?</span>`],[1799,12,I('min')],[1845,12,I('restore',11)],[1891,12,I('x',11)]]));

define('ribbon-tabs',`:host{height:26px;display:flex;align-items:stretch;border-bottom:1px solid #bcbcbc;color:#666;font-size:12.6px;--dy:1.5px}
 .p{width:78px;background:#0078d0;color:#fff}.m{width:54px;margin:0 0 -1px 5px;border:1px solid #bcbcbc;border-bottom:0;background:#f8f8f8;color:#0078d0}
 .p,.m,.r{display:flex;align-items:center;justify-content:center;flex:none}.r{justify-content:flex-start}`,
 `<div class="p">${T('Project',40)}</div><div class="m">${T('Map',26)}</div><div class="r">`+row(137,[[155,32,T('Insert',32)],[218,46,T('Analysis',46)],[295,27,T('View',27)],[353,22,T('Edit',22)],[406,47,T('Imagery',47)],[484,33,T('Share',33)],
 [1565,200,`${I('search',12)}${T('Command Search (Alt+Q)',136,'margin-left:9px;font-size:11.7px;font-style:italic;color:#888')}`,'background:#f7f8f8;height:24px;padding-left:6px;margin-top:-1px;--dy:0px'],
 [1770,16,I('user')],[1791,65,T('Brian (VIT C)',65,'font-size:11.7px;color:#444'),'--dy:0px'],[1859,7,I('arrow',7)],[1875,17,I('bell',17)],[1902,12,I('up')]])+`</div>`);

define('ribbon-big',`:host{display:flex;flex-direction:column;align-items:center;flex:none;padding-top:4px}
 .l{height:13px;line-height:13px;display:flex;align-items:center;justify-content:center;gap:3px;white-space:nowrap}.i{height:32px;margin-bottom:4px}:host([off]) .l{color:#a2a2a2}`,
 e=>{const a=k=>e.getAttribute(k);return `<div class="i">${I(a('icon'),32)}</div><div class="l">${T(a('l1'),a('w1'))}</div><div class="l">${a('l2')?T(a('l2'),a('w2')):''}${e.hasAttribute('arrow')?I('arrow',7):''}</div>`;});
define('ribbon-item',`:host{display:flex;align-items:center;height:23px;gap:4px;white-space:nowrap}:host([off]){color:#a2a2a2}`,
 e=>{const a=k=>e.getAttribute(k);return I(a('icon'),16)+T(a('label'),a('w'))+(e.hasAttribute('arrow')?`<span style="margin-left:1px;line-height:0">${I('arrow',7)}</span>`:'');});
define('ribbon-group',`:host{flex:none;position:relative;border-right:1px solid #dadada;height:82px;margin-top:4px;display:flex;flex-direction:column}
 .b{display:flex;height:70px;margin-top:-4px;flex:none}.f{display:flex;height:16px;align-items:center;margin-top:4px}.la{margin-left:auto;padding-right:5px;line-height:0;margin-top:-1px}`,
 e=>{const a=k=>e.getAttribute(k);const lx=+a('lx'),lw=+a('lw');return `<div class="b"><slot></slot></div><div class="f"><span style="margin-left:${lx}px">${T(a('label'),lw)}</span>${e.hasAttribute('launcher')?`<span class="la">${I('launcher',8)}</span>`:''}</div>`;});

const big=(x0,c,w,icon,l1,w1,l2='',w2='',ex='')=>[c-w/2,w,`<ribbon-big icon="${icon}" l1="${l1}" w1="${w1}" l2="${l2}" w2="${w2}" ${ex} style="width:${w}px"></ribbon-big>`,'align-items:flex-start;'];
const col=(x,w,...it)=>[x,w,it.map(([i,l,lw,ex=''])=>`<ribbon-item icon="${i}" label="${l}" w="${lw}" ${ex}></ribbon-item>`).join(''),'flex-direction:column;align-items:flex-start;padding-top:2px;'];
const icol=(x,...n)=>[x,16,n.map(i=>`<span style="height:22.500px;padding-top:4px;line-height:0">${I(i,16)}</span>`).join(''),'flex-direction:column;align-items:flex-start;padding-top:2px;'];
const grp=(x0,x1,label,cx,lw,l,items)=>`<ribbon-group label="${label}" lx="${(cx-lw/2-x0).toFixed(1)}" lw="${lw}" ${l?'launcher':''} style="width:${x1-x0}px">${row(x0,items)}</ribbon-group>`;
define('ribbon-bar',`:host{height:91px;display:flex;background:#f8f8f8;border-bottom:1px solid #bcbcbc;color:#444;--dy:-.5px}`,
 grp(0,128,'Clipboard',62.5,50,0,[big(0,22.5,32,'paste','Paste',28,'','','arrow off'),col(44,78,['cut','Cut',19,'off'],['copy','Copy',28,'off'],['copypath','Copy Path',55,'off'])])+
 grp(128,331,'Navigate',220.5,44,1,[big(0,155.5,40,'explore','Explore',39,'','','arrow'),icol(181,'globe','fixin','back'),icol(203,'zoomsel','fixout','fwd'),big(0,255.5,60,'bookmark','Bookmarks',59,'','','arrow'),big(0,307,34,'goxy','Go',15,'To XY',29)])+
 grp(331,561,'Layer',445,26,0,[big(0,362,50,'basemap','Basemap',48,'','','arrow'),big(0,408,36,'adddata','Add',22,'Data',23,'arrow'),col(430,125,['preset','Add Preset',57,'arrow'],['graphics','Add Graphics Layer',102,'off'])])+
 grp(561,798,'Selection',671.5,47,1,[big(0,585,34,'select','Select',31,'','','arrow'),big(0,632,52,'selattr','Select By',47,'Attributes',52),big(0,688.5,50,'selloc','Select By',47,'Location',46),col(718,74,['attrs','Attributes',52],['clear','Clear',27,'off'])])+
 grp(798,1039,'Inquiry',919,36,0,[big(0,830,46,'measure','Measure',45,'','','arrow'),big(0,877,36,'locate','Locate',35,'','','arrow'),big(0,933,68,'info','Infographics',66,'','','arrow'),big(0,1002,62,'coord','Coordinate',59,'Conversion',59)])+
 grp(1039,1207,'Labeling',1115,44,1,[[1047,105,`<div style="display:flex;gap:7px"><ribbon-item icon="pause" label="Pause" w="31" off></ribbon-item><ribbon-item icon="lock" label="Lock" w="25" off></ribbon-item></div><ribbon-item icon="unplaced" label="View Unplaced" w="78" off></ribbon-item><ribbon-item icon="more" label="More" w="28" arrow></ribbon-item>`,'flex-direction:column;align-items:flex-start;padding-top:2px;'],big(0,1178,44,'convert','Convert',41,'','','arrow')])+
 grp(1207,1346,'Offline',1268.500,36,1,[big(0,1241,56,'download','Download',53,'Map',23,'arrow off'),col(1274,66,['sync','Sync',25,'off'],['remove','Remove',43,'off'])]));

define('pane-head',`:host{height:26px;border-top:5px solid #ccc;display:flex;align-items:center;color:#666;font-size:15px;padding:3px 4px 0 5px}.s{flex:1;margin-top:-4px}.c{display:flex;gap:4.5px;margin-top:-7px;align-items:center}`,
 e=>`<span class="s">${T(e.getAttribute('label'),e.getAttribute('w'))}</span><span class="c">${I('arrow',9)}${I('pin',12)}${I('xs',13)}</span>`);

define('tree-row',`:host{display:flex;align-items:center;height:24px;white-space:nowrap}`,`<slot></slot>`);
const tr=(h,items,st='')=>`<tree-row style="height:${h}px;${st}">${row(7,items)}</tree-row>`;
const cube=(a,b)=>`<svg width="12" height="12" viewBox="0 0 12 12"><path d="M1 2l5-1.500L11 2v6.500L6 11.500 1 8.500z" fill="${a}"/><path d="M6 4l5-2v6.500L6 11.500z" fill="${b}"/></svg>`;
define('contents-pane',`:host{width:320px;border:1px solid #c9c9c9;border-top:0;background:#f7f9f8;height:868px;color:#444}
 .sr{display:flex;align-items:center;height:24px;margin:12px 0 9px}tree-row{--dy:-1px}
 .ti{display:flex;height:24px;align-items:center}.ul{display:flex;height:3px;margin:6px 0 0 15px;width:192px;background:linear-gradient(#0000 1px,#c8c8c8 1px 2px,#0000 2px)}.ul i{width:32px;background:#0078c8}`,
 `<pane-head label="Contents" w="62"></pane-head><div class="sr">${row(7,[[10,16,I('funnel')],[32,290,T('Search',35)+`<span style="flex:1"></span>${I('search',13)}<span style="width:7px"></span>${I('arrowg',8)}`,'border:1px solid #a5a5a5;background:#fff;height:24px;padding:0 5px;font-style:italic;']])}</div>
 <div class="ti" style="margin-top:9px">${row(7,[[27,22,I('tdraw')],[59,22,I('tsrc')],[92,22,I('tsel',21)],[123.5,22,I('tedit',21)],[154.500,22,I('tsnap',23)],[187,22,I('tlabel',22)]])}</div><div class="ul"><i></i></div>`+
 tr(36,[[22,93,T('Drawing Order',93,'font-size:13.300px;font-weight:600;color:#505050')]],'padding-top:5px;--dy:0px;')+
 tr(24,[[9,8,I('tri',7)],[21,16,I('sceneglobe')],[42,31,T('Scene',31)]])+
 tr(24,[[20,8,I('tri',7)],[30,294,T('3D Layers',52),'border:1px solid #1a7ec0;background:#c6dbee;height:24px;padding-left:1px;']])+
 tr(24,[[31,8,I('tri',7)],[43,14,I('check'),'margin-top:2px;'],[62,170,T('stc_VisualizeSpaceTimeCube3D1',169)]])+
 tr(22,[[46,36,T('VALUE',35)]])+
 [['-2.500000 - 5.660000','#dcdcdc','#8d8d8d',106],['5.660001 - 15.260000','#c0bfcf','#77758a',107],['15.260001 - 22.010000','#8f88b4','#5c5585',113],['22.010001 - 24.879999','#5f4a92','#3c2a6c',113],['24.880000 - 27.230000','#3d0d78','#20003f',113]].map(([s,a,b,w])=>tr(17,[[47,12,cube(a,b),'margin-top:-1px;'],[64,120,T(s,w)]])).join('')+
 tr(27,[[54,36,T('Charts',35,'font-weight:700')]],'padding-top:4px;')+
 tr(24,[[54,16,I('chart')],[80,172,T('Visualize in 3D Time-Series Chart',171)]],'--dy:0px;')+
 tr(24,[[20,8,I('tri',7),'margin-top:-1px;'],[32,53,T('2D Layers',52)]])+
 tr(24,[[43,14,I('check'),'margin-top:2px;'],[62,166,T('World Topographic Map - India',165)]])+
 tr(24,[[43,14,I('check'),'margin-top:2px;'],[62,87,T('World_Hillshade',86)]])+
 tr(24,[[20,8,I('tri',7),'margin-top:-1px;'],[32,97,T('Elevation Surfaces',96)]])+
 tr(24,[[31,8,I('tri',7),'margin-top:-1px;'],[49,41,T('Ground',40)]])+
 tr(27,[[54,14,I('check'),'margin-top:-1px;'],[77,149,T('WorldElevation3D/Terrain3D',148)]]));

/* 3D pillars, in thirds of a pixel; the left edge is quantised in steps like the rendered cubes. */
function pillar(tx,ty,bx,by,w,bw,side,c,sc,bands=[],bc='#3c1070'){
 const xl=y=>tx+(bx-tx)*(y-ty)/(by-ty), ww=y=>w+(bw-w)*(y-ty)/(by-ty);let s='';
 const quad=(y0,y1,o0,o1,f)=>`<path d="M${xl(y0)+o0} ${y0}L${xl(y0)+(o1??ww(y0))} ${y0}L${xl(y1)+(o1??ww(y1))} ${y1}L${xl(y1)+o0} ${y1}z" fill="${f}"/>`;
 s+=quad(ty,by,0,null,c);if(side)s+=quad(ty+4,by-4,0,side,sc);
 bands.forEach(([a,h])=>s+=quad(a,a+h,0,null,bc));
 return s;
}
const DK='#3b1070',DS='#2c0058',MD='#5c478c',MS='#4c377a',LL='#8a83ae',LS='#777298',WH='#dadadd',WS='#b5b3b5',GL='#bdbccb',GS='#9f9dad';
const sh=(x,y,r=34)=>`<ellipse cx="${x}" cy="${y}" rx="${r}" ry="${r*1.4}" fill="url(#sh)"/>`;
const dot=(x,y)=>`<circle cx="${x}" cy="${y}" r="14" fill="#f00" stroke="#221" stroke-width="3.500"/>`;
const shapes=`<g transform="translate(387 91) scale(.33333)">`+
 [[112,800],[325,600],[358,550],[396,690],[445,580],[472,615],[538,575],[672,595],[872,735],[926,660],[902,855],[1044,810]].map(a=>sh(a[0],a[1],60)).join('')+`<g shape-rendering="crispEdges">`+
 pillar(330,50,341,567,33,30,4,WH,WS)+pillar(299,72,309,620,34,33,0,MD,MS,[[85,12],[120,9],[135,4],[144,5],[155,5],[171,3],[353,3],[375,6],[402,10],[428,4]])+
 pillar(366,84,380,713,33,33,4,DK,DS,[[232,4],[622,5]],MD)+pillar(427,63,434,597,32,28,4,MD,MS)+
 pillar(449,78,456,632,34,33,3,DK,DS,[[186,6],[210,26],[241,7],[252,6],[262,10],[275,5],[285,4],[293,11],[309,8],[321,6],[331,10],[345,4],[352,17],[444,7],[456,22],[482,5],[492,24],[533,4],[545,4],[556,4],[563,4],[572,30]],MD)+
 pillar(517,61,521,593,35,34,4,GL,GS)+pillar(653,71,655,614,37,35,4,GL,GS)+
 pillar(904,99,901,680,38,35,4,DK,DS,[[213,5],[338,3],[498,8],[515,5],[545,12],[590,6],[625,5]],MD)+pillar(862,131,859,755,38,37,5,DK,DS,[[387,6],[438,6],[519,6],[579,5],[660,5],[694,4]],MD)+
 `</g>${dot(928,760)}<g shape-rendering="crispEdges">`+pillar(889,184,884,878,38,37,5,WH,WS)+`<path d="M889 184h37v4h-37z" fill="#fff"/><path d="M340 48h20v4h-20z" fill="#fff"/>`+
 pillar(1036,164,1025,830,37,37,6,DK,DS,[[438,6],[729,6]],MD)+pillar(75,159,96,818,33,33,0,DK,DS)+`</g>`+
 dot(1057,190)+dot(922,286)+`<circle cx="475" cy="406" r="21" fill="none" stroke="#0f0" stroke-width="9"/>`+dot(475,406)+`</g>
 <g transform="translate(807 91) scale(.33333)">`+[[134,695],[315,595],[590,620],[724,655],[850,630],[912,665]].map(a=>sh(a[0],a[1],60)).join('')+`<g shape-rendering="crispEdges">`+
 pillar(132,115,113,716,42,41,9,MD,MS,[[122,4],[132,8],[157,78],[240,8],[263,4],[275,11],[291,4],[318,8],[372,4],[387,4],[396,6],[415,4],[426,9],[450,4],[459,6],[480,3],[504,9],[591,3]],DK)+
 pillar(313,70,291,615,43,42,12,WH,WS)+`<path d="M315 69h30v4h-30z" fill="#fff"/>`+
 pillar(597,81,566,641,45,46,13,LL,LS,[[102,6],[126,12],[142,16],[172,5],[180,9],[231,6],[273,6],[369,5]],MD)+
 pillar(735,94,700,674,48,47,13,MD,MS,[[118,6],[140,14],[158,14],[190,4],[198,8],[252,8],[294,5],[393,5]],DK)+
 pillar(889,57,850,586,50,42,13,LL,LS)+pillar(862,76,826,651,48,52,15,LL,LS)+
 pillar(925,102,884,689,50,50,15,LL,LS,[[153,9],[174,3]],MD)+`</g></g>`;
define('scene-view',`:host{height:485px;background:#b1def5;position:relative;overflow:hidden}svg{display:block}
 .nb{position:absolute;left:18px;top:360px;display:flex;gap:6px}.nb b{width:16px;height:16px;border:1px solid #7ba0b4;background:#e4f1f8;display:flex;align-items:center;justify-content:center}
 .sp{position:absolute;left:1225px;top:459px}`,
 `<svg width="1254" height="485"><defs><radialGradient id="sh"><stop stop-color="#7faccb" stop-opacity=".3"/><stop offset="1" stop-color="#9cc8e0" stop-opacity="0"/></radialGradient></defs>${shapes}
 <circle cx="55" cy="430" r="30.300" fill="none" stroke="#8da5b5" stroke-width="12"/><circle cx="55" cy="430" r="30.300" fill="none" stroke="#f7f9fa" stroke-width="9.800"/>
 <path d="M49 391l16.500 24.500-12.500-4L41.500 419z" fill="#f8f8f8" stroke="#8c8c8c" stroke-width="1.100"/><path d="M86.500 360.500h3v3h-3zM91.500 360.500h3v3h-3zM91.500 365.500h3v3h-3z" fill="#fff"/><path d="M87 361h2v2h-2zM92 361h2v2h-2zM92 366h2v2h-2z" fill="#333"/></svg>
 <div class="nb"><b>${I('up',11)}</b><b><svg width="14" height="14" viewBox="0 0 14 14"><path d="M7 1v4M7 9v4M1 7h4M9 7h4M5.500 2.500L7 1l1.500 1.500M5.500 11.500L7 13l1.500-1.500M2.500 5.500L1 7l1.500 1.500M11.500 5.500L13 7l-1.500 1.500" stroke="#555" fill="none" stroke-width="1.200"/></svg></b><b><svg width="14" height="14" viewBox="0 0 14 14"><circle cx="7.500" cy="2" r="1.400" fill="#444"/><path d="M7 4v4l2.500 2 .5 3M7 8L4 13M4 7l1-2 2-1 2 2.500 2 .5" stroke="#444" fill="none" stroke-width="1.300"/></svg></b></div>
 <div class="sp">${I('scenepanel')}</div>`);

const sep=(h=14,c='#999')=>`<i style="width:1px;height:${h}px;background:${c}"></i>`;
define('status-bar',`:host{height:25px;display:flex;align-items:center;background:#f7f9f8;border-bottom:1px solid #c9c9c9}`,
 row(333,[[338,100,T('11 m',25)+`<span style="flex:1"></span>${I('arrow',7)}`,'border:1px solid #999;background:#fff;height:22px;padding:0 3px 0 6px;'],[442,1,sep()],[449,17,I('grid')],[472,17,I('corr')],[495,1,sep()],[849,130,T('0.0009734°E 0.0003830°N',130)],[989,11,I('down',11)],[1009,20,T('0 m',20)],[1392,1,sep()],[1400,16,I('selfeat')],[1420,104,T('Selected Features: 0',103,'color:#a0a0a0')],[1530,1,sep()],[1539,12,I('pausebar')],[1560,1,sep()],[1566,16,I('refresh')]]));

define('view-tabs',`:host{height:22px;display:flex;align-items:stretch;border-bottom:2px solid #0078c8;color:#222;--dy:1px}`,
 row(332,[[338,16,I('map'),'padding-top:1px;'],[359,24,T('Map',24)],[407,82,I('sceneglobe',15)+T('Scene',31,'margin-left:5px')+`<svg width="9" height="9" style="margin-left:8px"><path d="M1 1l7 7M8 1L1 8" stroke="#fff" stroke-width="1.500"/></svg>`,'background:#0078d0;color:#fff;padding-left:7px;'],[1575,9,I('arrow',9),'padding-top:3px;opacity:.75;']]));

define('table-tabs',`:host{height:20px;margin-top:6px;display:flex;overflow:hidden;color:#222;--dy:1px}`,
 row(332,[[332,38,T('ureIndia',42,'margin-left:-4px'),'overflow:hidden;'],[400,15,I('table',15)],[421,76,T('IND_adm1.csv',75)],[526,15,I('table',15)],[547,55,T('IND_adm1',54)],
 [626,259,I('chart',15)+T('IND_adm1 - Change in...as 1901 to 2020',208,'margin-left:6px')+`<span style="margin-left:7px;line-height:0;padding-top:1px">${I('xs',12)}</span>`,'background:#c8c8c8;color:#777;padding-left:6px;'],
 [891,15,I('table',15)],[912,166,T('IND_adm1_FeatureVerticesToPo',165)],[1107,15,I('table',15)],[1128,171,T('IND_adm1_FeatureVerticesToPo1',170)],[1329,16,I('chart')],[1350,199,T('stc_VisualizeSpaceTi...me-Series Chart',198)],[1575,10,I('overflow',10)]]));

define('chart-tools',`:host{height:35px;border-top:3px solid #ccc;border-bottom:1px solid #c6c6c6;display:flex;align-items:center;background:#f0f0f0}`,
 row(333,[[343,16,I('props',15)],[361,53,T('Properties',52)],[423,15,I('export',15)],[439,35,T('Export',34,'color:#111;font-weight:500')],[476,7,I('arrow',6)],[491,2,sep(24,'#bbb')],[499,33,T('Filter:',32,'font-weight:600')],[537,16,I('fsel',15)],[555,50,T('Selection',49)],[614,16,I('fext',15)],[632,34,T('Extent',33)],[676,2,sep(24,'#bbb')],[686,15,I('table',15)],[704,79,T('Attribute Table',78)],[794,16,I('switch')],[812,89,T('Switch Selection',88)],[913,14,I('clear',14)],[930,79,T('Clear Selection',78,'color:#aaa')],[1020,2,sep(24,'#bbb')],[1029,16,I('rotate',15)],[1047,66,T('Rotate Chart',65)],[1122,2,sep(24,'#bbb')],[1130,22,I('selbtn',17),'height:24px;background:#bdd3e8;justify-content:center;'],[1154,6,I('arrow',6)],[1171,17,I('zoomin',17)],[1199,16,I('fixout')],[1548,22,I('list',17),'height:24px;background:#bdd3e8;justify-content:center;'],[1572,6,I('arrow',6)]]));

const S={
 g:[437,443,462,449,455,455,435,443,448,448,451,455,455,439,446,452,441,437,454,445,453,451,453,447,447,446,423,439,440,446,451,430,432,444,440,458,442,438,428,442,446,443,458,433,441,441,446,441,439,446,446,445,450,454,437,436,443,444,440,450,458,453,444,448,447,439,448,456,463,444,439,458,442,436,458,446,452,452,442,441,446,439,459,441,426,431,429,430,441,427,441,428,428,434,424,422,432,435,433,438,433,411,419,420,437,435],
 b:[675,681,695,690,697,699,679,680,689,688,690,693,692,683,690,695,681,678,692,686,695,688,691,686,685,682,661,678,678,685,690,667,670,686,682,697,684,678,671,687,684,679,698,674,683,681,686,684,678,687,686,686,692,691,678,674,678,687,676,690,699,691,681,685,685,677,686,694,699,685,678,696,682,676,696,679,691,690,682,680,688,685,689,675,660,667,663,667,675,662,678,664,660,670,659,660,667,674,664,674,667,649,658,660,671,670],
 p:[555,560,571,569,561,559,559,557,556,553,572,564,565,556,562,564,555,556,565,561,554,558,557,555,555,558,551,549,555,551,557,551,548,558,567,561,555,555,552,555,558,554,554,541,555,553,559,566,568,555,571,558,569,570,555,555,567,556,555,554,554,556,558,565,548,552,555,559,564,551,550,561,556,546,552,553,559,561,552,551,545,549,568,538,538,552,543,548,547,545,541,531,534,542,527,528,544,549,547,544,551,540,542,552,547,551],
 u:[234,236,244,245,232,237,237,233,235,230,247,237,240,233,236,239,230,233,236,236,231,236,233,233,233,238,232,227,235,232,236,227,229,240,247,240,237,234,234,240,239,238,236,226,239,228,235,236,239,240,245,233,243,244,234,240,245,239,233,242,238,239,244,240,228,235,236,239,241,238,235,235,229,227,237,234,241,245,240,234,229,232,243,225,218,238,224,228,229,231,223,218,226,229,213,216,228,237,233,227,236,226,228,235,230,231]};
const sparse=(base,o)=>Array.from({length:106},(_,i)=>o[1915+i]??base);
const red=sparse(148,{1917:178,1918:152,1919:163,1920:158,1926:166,1927:166,1933:167,1934:157,1935:161,1936:160,1937:160,1945:159,1950:170,1957:170,1967:162,1968:162,1975:168,1976:162,1982:163,1983:174,1986:168,1989:170,1992:163,1997:174});
const gr3=sparse(146,{1915:156,1916:158,1917:168,1918:170,1919:159,1920:157,1921:158,1922:154,1924:154,1925:174,1926:156,1927:158,1928:154,1929:158,1930:166,1940:157,1947:154,1948:159,1949:171,1950:166,1951:158,1952:155,1953:156,1954:158,1955:158,1956:157,1957:162,1959:158,1961:154,1962:161,1963:167,1964:162,1965:172,1966:158,1967:170,1968:170,1969:160,1970:161,1971:168,1972:172,1973:163,1974:156,1975:163,1976:158,1977:168,1978:166,1983:163,1984:156,1987:157,1990:158,1991:168,1992:173,1993:167,1994:155,1997:166,2000:159});
const line=(a,d,c)=>{const pts=a.map((v,i)=>[(51.3+i*6.3).toFixed(1),((v+d)/3-10).toFixed(1)]);return `<polyline points="${pts.map(p=>p.join()).join(' ')}" fill="none" stroke="${c}" stroke-width="1.500"/>`+`<path d="${pts.map(p=>`M${p[0]} ${p[1]}h0`).join('')}" stroke="${c}" stroke-width="5.200" stroke-linecap="round"/>`;};
const plot=`<svg width="724" height="275"><g><path d="M51 65h662M51 135.700h662M51 206.300h662" stroke="#ebebeb"/><path d="M51 223h662" stroke="#ccc" stroke-width="2"/><path d="${Array.from({length:11},(_,i)=>`M${51.3+i*63} 223v5`).join('')}" stroke="#bbb"/></g>
 <svg x="0" y="43.500" width="724" height="230" viewBox="0 43.500 724 230">`+line(gr3,0,'#33a02c')+line(red,0,'#e31a1c')+line(S.u,-48,'#b2df8a')+line(S.u,-40,'#33a02c')+line(S.u,22,'#b2df8a')+line(S.u,0,'#1f78b4')+line(S.u,11,'#fb9a99')+line(S.g,-84,'#fb9a99')+line(S.g,0,'#33a02c')+line(S.p,0,'#6a3d9a')+line(S.b,0,'#1f78b4')+`</svg>
 <g font-family="Open Sans,sans-serif" font-size="12.500" fill="#555">${Array.from({length:11},(_,i)=>`<text x="${51.3+i*63}" y="245.500" text-anchor="middle" textLength="27">${1915+i*10}</text>`).join('')}<text x="38.500" y="71" text-anchor="end" textLength="14">20</text><text x="38.500" y="141" text-anchor="end" textLength="14">10</text><text x="38.500" y="212" text-anchor="end">0</text>
 <text x="330.500" y="271" textLength="109" font-size="14.500">Year_Converted</text><text transform="translate(16 232) rotate(-90)" textLength="196" font-size="13.500">AverageAnnualTemperature</text></g></svg>`;
const LG=[
 [[0,'Andaman and Nicobar',133],[1,'Andhra Pradesh',93],[2,'Arunachal Pradesh',109],[3,'Assam',37],[4,'Bihar',30],[5,'Chandigarh',68],[6,'Chhattisgarh',74],[7,'Dadra and Nagar Haveli',141],[8,'Daman and Diu',91]],
 [['#b49bd0','Delhi',30,1],[0,'Goa',24],[1,'Gujarat',42],[2,'Haryana',48],[3,'Himachal Pradesh',105],['#fbcfce','Jammu and Kashmir',118,1],[5,'Jharkhand',59],[6,'Karnataka',58],[7,'Kerala',36]],
 [[8,'Lakshadweep',78],[9,'Madhya Pradesh',97],[0,'Maharashtra',73],[1,'Manipur',49],[2,'Meghalaya',64],[3,'Mizoram',51],[4,'Nagaland',56],[5,'Orissa',36],[6,'Puducherry',66]],
 [[7,'Punjab',40],[8,'Rajasthan',57],[9,'Sikkim',38],[0,'Tamil Nadu',66],[1,'Telangana',59],[2,'Tripura',40],[3,'Uttar Pradesh',80],[4,'Uttaranchal',67],[5,'West Bengal',72]]];
const PC=['#a6cee3','#1f78b4','#b2df8a','#33a02c','#fb9a99','#e31a1c','#fdbf6f','#ff7f00','#cab2d6','#6a3d9a'];
define('chart-legend',`:host{display:grid;grid-template-columns:163px 142px 120px 99px;width:524px;font-size:12.600px;color:#4c4c4c}.c{display:flex;flex-direction:column}.r{display:flex;align-items:center;height:25px;gap:3.500px;white-space:nowrap}.r svg{flex:none;margin-top:-2px}.o{color:#b4b4b4}`,
 LG.map(c=>`<div class="c">${c.map(([k,n,w,o])=>`<div class="r${o?' o':''}"><svg width="11" height="8"><path d="M0 4h11" stroke="${PC[k]||k}" stroke-width="1.500"/><circle cx="5.500" cy="4" r="3.700" fill="${PC[k]||k}"/></svg>${T(n,w)}</div>`).join('')}</div>`).join(''));
define('chart-panel',`:host{height:276px;background:#fff;border:1px solid #c9c9c9;border-top:0;display:flex;flex-direction:column;overflow:hidden}
 .t{height:0;margin-left:334px}.t fit-text{font-size:19.500px;line-height:32px;color:#4c4c4c}.d{display:flex}chart-legend{margin:29px 0 0 7px}`,
 `<div class="t">${T('Change in AverageAnnualTemperature over Yeas 1901 to 2020',586)}</div><div class="d">${plot}<chart-legend></chart-legend></div>`);

define('center-area',`:host{width:1256px;display:flex;flex-direction:column}.v{border-left:1px solid #c9c9c9;border-right:1px solid #c9c9c9}`,
 `<view-tabs></view-tabs><div class="v"><scene-view></scene-view><status-bar></status-bar></div><table-tabs></table-tabs><div class="v"><chart-tools></chart-tools></div><chart-panel></chart-panel>`);

const field=(label,lw,html,w,extra='',warn='')=>`<div style="height:41px"><div style="height:17px;display:flex;align-items:center;margin-left:${warn?3:18}px">${warn?`<span style="width:15px;line-height:0">${I('warn',13)}</span>`:''}${T(label,lw)}</div><div style="display:flex;align-items:center;margin-left:18px"><div style="width:${w}px;height:22px;border:1px solid #a5a5a5;background:#fff;display:flex;align-items:center;padding:0 ${w>280?3:1}px 0 4px;box-sizing:border-box"><div style="flex:1;overflow:hidden;white-space:nowrap;height:18px">${html}</div>${w>280?'<svg width="6" height="4" style="margin-left:4px"><path d="M0 0h6L3 4z" fill="#111"/></svg>':''}</div>${extra}</div></div>`;
const fol=`<span style="margin-left:7px;line-height:0">${I('folder',16)}</span>`;
define('gp-pane',`:host{width:320px;display:flex;flex-direction:column}.p{border:1px solid #c9c9c9;border-top:0;background:#f7f9f8;height:849px;display:flex;flex-direction:column}
 .h,.tb{display:flex;align-items:center}.h{height:24px;margin-top:12px}.tb{height:25px;margin-top:9px;font-size:12.800px;--dy:-1px}.f{margin-top:8px}.run{margin:auto 6px 6px auto;width:82px;height:25px;border:1px solid #888;background:#fdfdfd;display:flex;align-items:center;padding:0 3px 0 11px;flex:none}
 .n{height:61px;margin:0 2px 0 3px;background:#fdf8c9;display:flex;align-items:center;padding:0 7px 0 12px;flex:none}.n .tx{margin-left:16px;flex:1;line-height:15px;--dy:-1px}.lk{color:#2a7e3a;display:flex;gap:7px;margin-top:4px}
 .bt{display:flex;height:20px;--dy:-1px}`,
 `<div class="p"><pane-head label="Geoprocessing" w="103"></pane-head><div class="h">${row(1595,[[1601,20,I('backc')],[1647,217,T('Visualize Space Time Cube in 3D',216,'font-size:14.800px')],[1888,20,I('plusc')]])}</div>
 <div class="tb">${row(1595,[[1604,69,T('Parameters',69,'font-weight:600'),'height:25px;border-bottom:2px solid #0078c8;'],[1683,78,T('Environments',78)],[1890,18,I('help')]])}</div>
 <div class="f">${field('Input Space Time Cube',122,T('C:\\Users\\ericb\\OneDrive\\Documents\\ArcGIS\\Proj',260),266,fol)}${field('Cube Variable',72,T('ANNUALTEMPERATUREINDIA_AVERAGEANNUALTEMP',286),292)}${field('Display Theme',77,T('Value',28),292)}${field('Output Features',85,T('stc_VisualizeSpaceTimeCube3D1',169),266,fol,1)}</div>
 <div class="run">${I('run',16)}${T('Run',21,'margin-left:7px;color:#222')}<span style="flex:1"></span>${I('arrow',6)}</div>
 <div class="n">${I('warn2',15)}<div class="tx">${T('Visualize Space Time Cube in 3D completed',229)}<br>${T('with warnings.',76)}<div class="lk">${T('View Details',63)}${T('Open History',70)}</div></div>${I('xs',11)}</div></div>
 <div class="bt">${row(1594,[[1601,41,T('Catalog',40)],[1648,89,T('Geoprocessing',78,'color:#0078c8'),'background:#f9fbfa;border:1px solid #ccc;border-top:0;justify-content:center;'],[1743,86,T('Chart Properties',85)]])}</div>`);

const TB=['win','task','widgets','store','explorer','chrome','predator','figma','ps','vscode','teams','notion','spotify','sticky','arcgis'];
define('task-bar',`:host{height:48px;display:flex;align-items:center;background:linear-gradient(90deg,#2d180f,#301b11 35%,#2d2413 42%,#2a2814 55%,#2e2213 62%,#351b12 70%,#2d1710);color:#fff}
 .a{width:40px;height:40px;margin-right:4px;border-radius:4px;display:flex;flex-direction:column;align-items:center;flex:none;padding-top:8px}.a i{width:6px;height:3px;border-radius:2px;background:#aaa099;margin-top:4px}.a.on{background:#ffffff12;box-shadow:inset 0 0 0 1px #ffffff10}.a.on i{width:16px;background:#c9bca8}
 .l{display:flex;margin-left:633px;width:664px}`,
 `<div class="l">${TB.map(n=>`<div class="a${n==='arcgis'?' on':''}">${I(n,24)}${['explorer','chrome','sticky','arcgis'].includes(n)?'<i></i>':''}</div>`).join('')}</div>`+
 row(1297,[[1671,12,I('upw')],[1698,26,T('ENG',23)+T('IN',11),'flex-direction:column;font-size:11.300px;line-height:16px;'],[1741,15,I('wifi',15)],[1764,16,I('sound')],[1788,17,I('batt')],[1821,57,T('14:52',28)+T('01-12-2021',57),'flex-direction:column;align-items:flex-end;font-size:11.300px;line-height:16px;'],[1886,14,I('moon')]]));

define('pro-app',`:host{width:1920px;height:1080px;overflow:hidden;background:#f0f0f0}.w{display:flex;height:881px;padding-top:6px}contents-pane{margin-left:6px}center-area{margin-left:6px}gp-pane{margin-left:6px}`,
 `<title-bar></title-bar><ribbon-tabs></ribbon-tabs><ribbon-bar></ribbon-bar><div class="w"><contents-pane></contents-pane><center-area></center-area><gp-pane></gp-pane></div><task-bar></task-bar>`);
FitText.all.forEach(e=>e.fit());
</script>
</body>
</html>
